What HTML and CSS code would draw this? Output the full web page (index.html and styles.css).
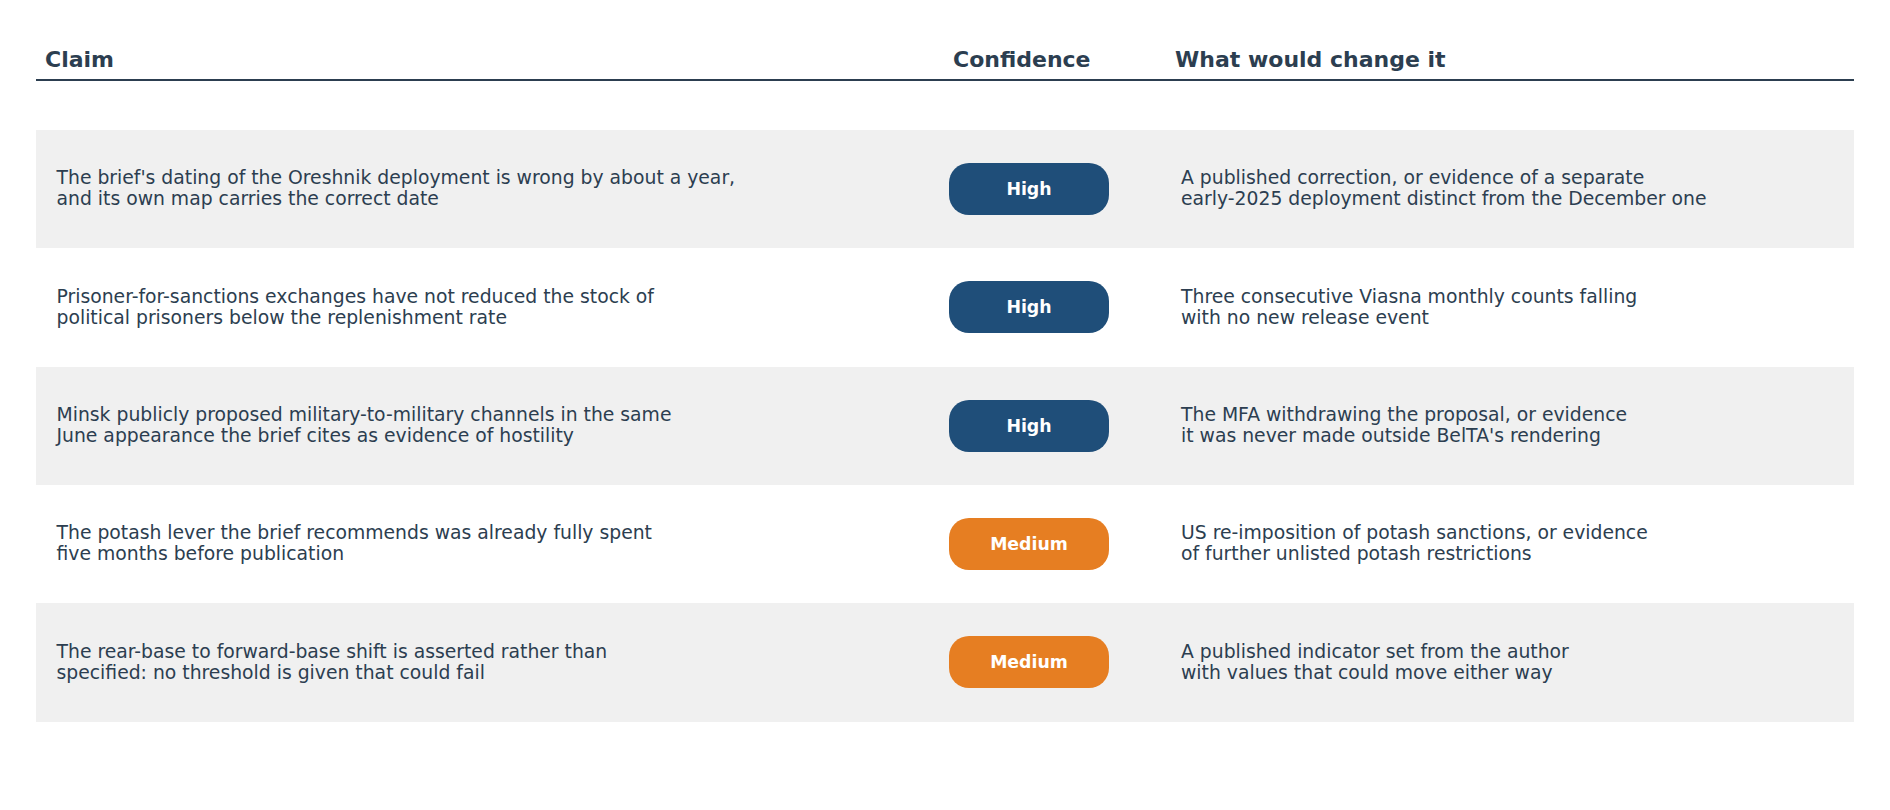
FILE: index.html
```html
<!DOCTYPE html>
<html lang="en">
<head>
<meta charset="utf-8">
<title>Claims</title>
<link rel="stylesheet" href="styles.css">
</head>
<body>
<div class="table">
  <div class="head">
    <div class="h h-claim">Claim</div>
    <div class="h h-conf">Confidence</div>
    <div class="h h-change">What would change it</div>
  </div>
  <div class="rows">
    <div class="row shaded">
      <div class="c c-claim">The brief's dating of the Oreshnik deployment is wrong by about a year,<br>and its own map carries the correct date</div>
      <div class="c c-conf"><span class="badge high">High</span></div>
      <div class="c c-change">A published correction, or evidence of a separate<br>early-2025 deployment distinct from the December one</div>
    </div>
    <div class="row">
      <div class="c c-claim">Prisoner-for-sanctions exchanges have not reduced the stock of<br>political prisoners below the replenishment rate</div>
      <div class="c c-conf"><span class="badge high">High</span></div>
      <div class="c c-change">Three consecutive Viasna monthly counts falling<br>with no new release event</div>
    </div>
    <div class="row shaded">
      <div class="c c-claim">Minsk publicly proposed military-to-military channels in the same<br>June appearance the brief cites as evidence of hostility</div>
      <div class="c c-conf"><span class="badge high">High</span></div>
      <div class="c c-change">The MFA withdrawing the proposal, or evidence<br>it was never made outside BelTA's rendering</div>
    </div>
    <div class="row">
      <div class="c c-claim">The potash lever the brief recommends was already fully spent<br>five months before publication</div>
      <div class="c c-conf"><span class="badge medium">Medium</span></div>
      <div class="c c-change">US re-imposition of potash sanctions, or evidence<br>of further unlisted potash restrictions</div>
    </div>
    <div class="row shaded">
      <div class="c c-claim">The rear-base to forward-base shift is asserted rather than<br>specified: no threshold is given that could fail</div>
      <div class="c c-conf"><span class="badge medium">Medium</span></div>
      <div class="c c-change">A published indicator set from the author<br>with values that could move either way</div>
    </div>
  </div>
</div>
</body>
</html>
```

FILE: styles.css
```css
html, body {
  margin: 0;
  padding: 0;
  background: #ffffff;
}

body {
  padding: 47px 36px 0 36px;
  font-family: "DejaVu Sans", "Liberation Sans", sans-serif;
  color: #2c3e50;
}

.table {
  width: 1818px;
}

.head {
  display: grid;
  grid-template-columns: 908px 222px 1fr;
  padding-bottom: 6.4px;
  border-bottom: 2px solid #2c3e50;
}

.h {
  font-size: 22px;
  font-weight: bold;
  line-height: 25.6px;
  padding-left: 9px;
  white-space: nowrap;
}

.rows {
  margin-top: 49px;
  display: flex;
  flex-direction: column;
}

.row {
  display: grid;
  grid-template-columns: 908px 222px 1fr;
  align-items: center;
  height: 118.33px;
}

.row.shaded {
  background: #f0f0f0;
}

.c {
  font-size: 18.8px;
  line-height: 21px;
  white-space: nowrap;
}

.c-claim {
  padding-left: 20.5px;
  padding-bottom: 1.5px;
}

.c-conf {
  padding-left: 5px;
  display: flex;
  align-items: center;
}

.c-change {
  padding-left: 15px;
  padding-bottom: 1.5px;
}

.badge {
  display: flex;
  align-items: center;
  justify-content: center;
  width: 160px;
  height: 52px;
  border-radius: 20px;
  color: #ffffff;
  font-weight: bold;
  font-size: 17.33px;
  line-height: 20px;
}

.badge.high {
  background: #1f4e79;
}

.badge.medium {
  background: #e67e22;
}
```
